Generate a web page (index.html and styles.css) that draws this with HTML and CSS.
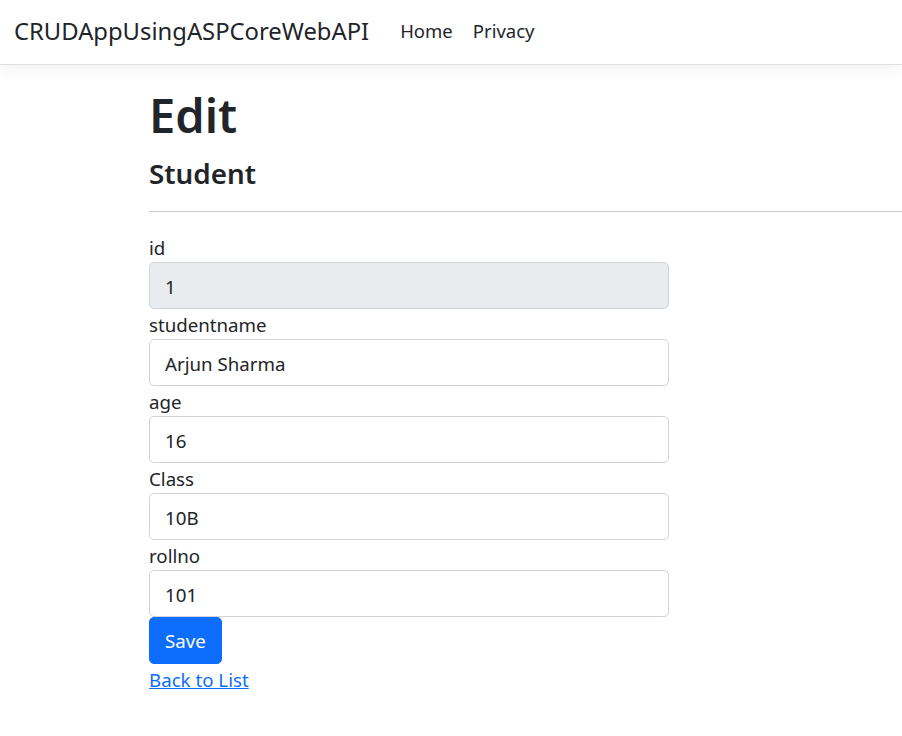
FILE: index.html
```html
<!DOCTYPE html>
<html lang="en">
<head>
<meta charset="utf-8">
<title>Edit - CRUDAppUsingASPCoreWebAPI</title>
<link rel="stylesheet" href="styles.css">
</head>
<body>
<header class="navbar">
  <a class="brand" href="#">CRUDAppUsingASPCoreWebAPI</a>
  <nav class="nav">
    <a class="nav-link" href="#">Home</a>
    <a class="nav-link" href="#">Privacy</a>
  </nav>
</header>
<main class="main">
  <h1 class="title">Edit</h1>
  <h4 class="subtitle">Student</h4>
  <hr class="rule">
  <form class="form">
    <div class="field">
      <label class="label">id</label>
      <input class="control control-readonly" value="1" readonly>
    </div>
    <div class="field">
      <label class="label">studentname</label>
      <input class="control" value="Arjun Sharma">
    </div>
    <div class="field">
      <label class="label">age</label>
      <input class="control" value="16">
    </div>
    <div class="field">
      <label class="label">Class</label>
      <input class="control" value="10B">
    </div>
    <div class="field">
      <label class="label">rollno</label>
      <input class="control" value="101">
    </div>
    <div class="actions">
      <button class="btn" type="button">Save</button>
    </div>
  </form>
  <div class="back"><a class="link" href="#">Back to List</a></div>
</main>
</body>
</html>
```
FILE: styles.css
```css
* { box-sizing: border-box; }
html, body {
  margin: 0;
  padding: 0;
  background: #fff;
}
body {
  font-family: "Noto Sans", "Open Sans", sans-serif;
  font-size: 18.7px;
  line-height: 30px;
  color: #212529;
  overflow: hidden;
}
.navbar {
  display: flex;
  align-items: center;
  height: 65px;
  padding: 0 14px 3px;
  border-bottom: 1px solid #dee2e6;
  box-shadow: 0 5px 15px rgba(0, 0, 0, 0.05);
  background: #fff;
  position: relative;
}
.brand {
  font-size: 23.8px;
  color: #212529;
  text-decoration: none;
  margin-right: 31px;
}
.nav {
  display: flex;
  gap: 20px;
}
.nav-link {
  color: #212529;
  text-decoration: none;
  font-size: 18.5px;
}
.main {
  padding: 20px 0 0 149px;
}
.title {
  margin: 0 0 10px;
  font-size: 47px;
  line-height: 60px;
  font-weight: 600;
}
.subtitle {
  margin: 0 0 10px;
  font-size: 27.8px;
  line-height: 36px;
  font-weight: 600;
}
.rule {
  margin: 20px 0;
  border: 0;
  border-top: 1px solid #c8c9ca;
}
.form {
  width: 520px;
}
.field {
  display: flex;
  flex-direction: column;
}
.label {
  line-height: 30px;
  padding-top: 1px;
  margin-bottom: -1px;
}
.control {
  display: block;
  width: 100%;
  height: 47px;
  padding: 1px 15px 0;
  font: inherit;
  color: #212529;
  border: 1px solid #ced4da;
  border-radius: 5px;
  background: #fff;
}
.control-readonly {
  background: #e9ecef;
}
.actions {
  display: flex;
}
.btn {
  height: 47px;
  padding: 1px 15px 0;
  font: inherit;
  color: #fff;
  background: #0d6efd;
  border: 1px solid #0d6efd;
  border-radius: 5px;
}
.back {
  margin-top: 1px;
}
.link {
  color: #0d6efd;
  text-decoration: underline;
}
```
